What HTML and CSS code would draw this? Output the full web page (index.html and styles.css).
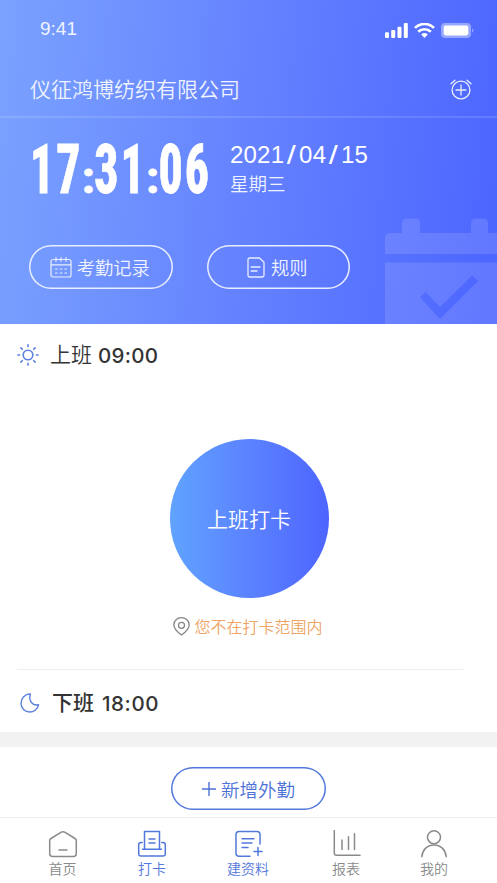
FILE: index.html
```html
<!DOCTYPE html>
<html lang="zh-CN">
<head>
<meta charset="utf-8">
<title>考勤打卡</title>
<link rel="stylesheet" href="styles.css">
</head>
<body>
<div class="app">
  <header class="hero">
    <div class="status">
      <span class="status-time">9:41</span>
      <svg class="status-icons" width="90" height="16" viewBox="0 0 90 16" fill="#fff">
        <rect x="0" y="9.3" width="4" height="5.7" rx="1"/><rect x="6.2" y="7" width="4" height="8" rx="1"/><rect x="12.5" y="3.7" width="4" height="11.3" rx="1"/><rect x="18.8" y="0" width="4" height="15" rx="1"/>
        <g fill="none" stroke="#fff" stroke-width="2.7"><path d="M30 4.9a13.5 13.5 0 0 1 19 0"/><path d="M33.2 8.8a9 9 0 0 1 12.6 0"/></g>
        <path d="M36.2 11.4a5 5 0 0 1 6.6 0L39.5 14.9z"/>
        <rect x="56" y="0" width="30" height="15" rx="4" opacity=".4"/><rect x="58.7" y="2.6" width="24.6" height="9.8" rx="1.8"/><path d="M87.2 5.2q2.2 2.3 0 4.6z" opacity=".5"/>
      </svg>
    </div>
    <div class="company">
      <span>仪征鸿博纺织有限公司</span>
      <svg width="22" height="22" viewBox="0 0 22 22" fill="none" stroke="#e8edff" stroke-width="1.3" stroke-linecap="round"><circle cx="11" cy="12" r="8.9"/><path d="M11 7v10M6 12h10M1 5.8l4-3.6M21 5.8l-4-3.6"/></svg>
    </div>
    <div class="now">
      <div class="clock"><span class="clock-text">17<i>:</i>31<i>:</i>06</span></div>
      <div class="date"><div class="day">2021<i>/</i>04<i>/</i>15</div><div class="week">星期三</div></div>
    </div>
    <div class="actions">
      <button class="pill">
        <svg width="22" height="21" viewBox="0 0 22 21" fill="none" stroke="#e8edff" stroke-width="1.2" stroke-linecap="round"><rect x="1" y="2.5" width="20" height="17.5" rx="2"/><path d="M1 7.8h20M6 .7v3.6M11 .7v3.6M16 .7v3.6"/><path d="M5.5 12h1.7M10.2 12h1.7M14.9 12h1.7M5.5 16h1.7M10.2 16h1.7M14.9 16h1.7"/></svg>
        <span>考勤记录</span>
      </button>
      <button class="pill rules">
        <svg width="18" height="21" viewBox="0 0 18 21" fill="none" stroke="#e8edff" stroke-width="1.3" stroke-linecap="round" stroke-linejoin="round"><path d="M2.7 1h9.8L17 5.2v13q0 1.8-1.8 1.8H2.7Q1 20 1 18.2V2.8Q1 1 2.7 1z"/><path d="M4.2 10H13M4.2 14H10"/></svg>
        <span>规则</span>
      </button>
    </div>
    <svg class="watermark" width="112" height="106" viewBox="0 0 112 106">
      <path d="M0 36V20q0-5 5-5h12V5.500q0-5 5-5h8q5 0 5 5V15h51V5.500q0-5 5-5h7q5 0 5 5V15h10v21z"/>
      <path fill-rule="evenodd" d="M0 44.500h113V107H0zM35 79.500l20 21.500 38-38-6-5.500L55 89 40.500 74z"/>
    </svg>
  </header>

  <main>
    <section class="shift">
      <svg width="22" height="22" viewBox="0 0 22 22" fill="none" stroke="#5b80df" stroke-width="1.6" stroke-linecap="round"><circle cx="11" cy="11" r="4.8"/><path d="M11 .9v1.7M11 19.400v1.700M.9 11h1.700M19.400 11h1.700M3.900 3.900l1.400 1.400M16.700 16.700l1.400 1.400M3.900 18.100l1.400-1.400M16.700 5.300l1.400-1.400"/></svg>
      <span class="name">上班</span><span class="hour">09:00</span>
    </section>
    <section class="punch">
      <button class="punch-button">上班打卡</button>
      <div class="range">
        <svg width="17" height="19" viewBox="0 0 17 19" fill="none" stroke="#858585" stroke-width="1.3"><path d="M8.500 18C6 16.200.8 12.400.8 8a7.700 7.300 0 0 1 15.400 0c0 4.400-5.200 8.200-7.700 10z"/><circle cx="8.500" cy="8.300" r="3"/></svg>
        <span>您不在打卡范围内</span>
      </div>
    </section>
    <section class="shift off">
      <svg width="20" height="20" viewBox="0 0 20 20" fill="none" stroke="#5b80df" stroke-width="1.4" stroke-linejoin="round"><path d="M10.400 1C8.300 7 12 13 18.600 11.800 17.700 16 14 19 9.700 19 4.800 19 1 15.300 1 10.300 1 5.300 4.900.8 10.400 1z"/></svg>
      <span class="name">下班</span><span class="hour">18:00</span>
    </section>
    <div class="band"></div>
    <section class="outside">
      <button class="add">
        <svg width="14" height="14" viewBox="0 0 14 14" stroke="#4c72d8" stroke-width="1.4"><path d="M7 0v14M0 7h14"/></svg>
        <span>新增外勤</span>
      </button>
    </section>
  </main>

  <nav class="tabs">
    <a class="tab home"><svg width="30" height="28" viewBox="0 0 30 28"><path d="M3 8.500 13.300 2.200q1.700-1 3.400 0L27 8.500q1.300.8 1.300 2.300V23.500q0 3-3 3H4.700q-3 0-3-3V10.800Q1.700 9.300 3 8.500zM11 20h8"/></svg><span>首页</span></a>
    <a class="tab clocking active"><svg width="30" height="28" viewBox="0 0 30 28"><path d="M7.500 19.300V1.500h15v17.800M12 9h6M12 13h6M5.500 19.300h19M5.200 12.500H4q-2.300 0-2.300 2.300v8.900q0 2.300 2.300 2.300h22q2.300 0 2.300-2.300v-8.900q0-2.300-2.300-2.300h-1.200"/></svg><span>打卡</span></a>
    <a class="tab records active"><svg width="30" height="28" viewBox="0 0 30 28"><path d="M17 26.300H6q-3 0-3-3V4.500q0-3 3-3h18q3 0 3 3V14M9 8.700h12M9 13h10M9 17.500h6M25 17.500v8M21 21.500h8"/></svg><span>建资料</span></a>
    <a class="tab report"><svg width="30" height="28" viewBox="0 0 30 28"><path d="M3.300.7V23q0 2.300 2.300 2.300H29M11 10v9.500M17.500 6.800v12.700M23.500 3.700v15.800"/></svg><span>报表</span></a>
    <a class="tab mine"><svg width="30" height="28" viewBox="0 0 30 28"><circle cx="15" cy="7.300" r="6.500"/><path d="M2.800 26.800C3.500 19.500 8.300 15 15 15s11.500 4.500 12.200 11.800"/></svg><span>我的</span></a>
  </nav>
</div>
</body>
</html>
```
FILE: styles.css
```css
* { box-sizing: border-box; }
body {
  margin: 0;
  font-family: Inter, "Noto Sans CJK SC", sans-serif;
  font-weight: 350;
  color: #333;
  background: #fff;
}
svg { display: block; flex: none; }
button { font: inherit; color: inherit; padding: 0; background: none; border: 0; }
.app { width: 497px; height: 883px; overflow: hidden; display: flex; flex-direction: column; }
.hero {
  position: relative;
  height: 324px;
  flex: none;
  color: #fff;
  background: linear-gradient(95deg, #7aa2ff 0%, #6380ff 53%, #4c65ff 100%);
}
.status { height: 61px; padding: 0 19px 0 40px; display: flex; justify-content: space-between; }
.status-time { font: 400 19px/24px "Liberation Sans", Arial, sans-serif; padding-top: 17px; color: #eff3ff; }
.status-icons { margin-top: 23px; margin-right: 3px; }
.company {
  height: 57px;
  padding: 0 25px 0 30px;
  display: flex;
  justify-content: space-between;
  align-items: center;
  border-bottom: 2px solid rgba(255, 255, 255, .12);
  font-size: 21px;
  color: #eff3ff;
}
.company span { padding-bottom: 2px; }
.now { height: 127px; display: flex; padding: 22px 0 0 30px; }
.clock { width: 200px; height: 60px; }
.clock-text {
  display: block;
  width: max-content;
  font: 800 69px/60px "Roboto Condensed", Roboto, sans-serif;
  letter-spacing: 3px;
  white-space: nowrap;
  -webkit-text-stroke: .8px #fff;
  transform: scaleX(.69);
  transform-origin: left;
}
.clock-text i {
  display: inline-block;
  width: 17px;
  font-style: normal;
  font-size: 44px;
  letter-spacing: 0;
  text-align: center;
  transform: scaleX(1.5);
}
.day { font: 400 24px/30px "Liberation Sans", Arial, sans-serif; letter-spacing: .2px; white-space: nowrap; }
.day i { display: inline-block; font-style: normal; margin: 0 4px; transform: scale(1.35, 1.1); }
.week { font-size: 18.500px; line-height: 28px; color: #eff3ff; }
.actions { display: flex; gap: 34px; padding-left: 29px; }
.pill {
  width: 143.500px;
  height: 44px;
  box-shadow: inset 0 0 0 1.500px #e8edff;
  border-radius: 22px;
  display: flex;
  align-items: center;
  justify-content: center;
  gap: 5px;
  font-size: 18.300px;
  color: #eff3ff;
}
.rules { gap: 6px; }
.pill svg { margin-left: -2px; }
.watermark { position: absolute; right: 0; bottom: 0; fill: rgba(255, 255, 255, .12); }
main { flex: none; height: 493px; }
.shift { height: 62px; padding-left: 17px; display: flex; align-items: center; }
.name { font-size: 21px; line-height: 30px; margin-left: 11px; }
.hour { font: 500 20.500px/30px Inter, sans-serif; letter-spacing: .3px; margin-left: 6px; padding-top: 1px; }
.punch { height: 283px; padding: 53px 0 0 1px; display: flex; flex-direction: column; align-items: center; }
.punch-button {
  width: 159px;
  height: 159px;
  border-radius: 50%;
  padding-bottom: 2px;
  font-size: 21px;
  color: #fff;
  background: linear-gradient(90deg, #60a3ff, #5b82ff 50%, #4d65ff);
}
.range { display: flex; align-items: center; gap: 4px; margin: 17px 2px 0 0; font-size: 16px; line-height: 24px; color: #eda568; }
.range svg { margin-bottom: 2px; }
.off { height: 63px; margin: 0 34px 0 17px; padding: 4px 0 0 3px; border-top: 1px solid #eee; }
.off .name { font-weight: 500; margin-left: 12px; }
.off .hour { margin-left: 8px; letter-spacing: .6px; }
.band { height: 15px; background: #f2f2f2; }
.outside { padding: 20px 0 0 171px; }
.add {
  width: 155px;
  height: 43px;
  box-shadow: inset 0 0 0 1.500px #5378dc;
  border-radius: 22px;
  display: flex;
  align-items: center;
  justify-content: center;
  gap: 5px;
  font-size: 18.500px;
  color: #4c72d8;
}
.tabs {
  height: 66px;
  border-top: 1px solid #eee;
  display: grid;
  grid-template-columns: 107px 72px 120px 76px 100px;
  color: #8a8a8a;
  padding-left: 9px;
}
.tab { display: flex; flex-direction: column; align-items: center; padding-top: 12px; font-size: 14px; line-height: 22px; }
.tab svg { fill: none; stroke: currentColor; stroke-width: 1.500; stroke-linecap: round; stroke-linejoin: round; }
.active { color: #5378dc; }
```
